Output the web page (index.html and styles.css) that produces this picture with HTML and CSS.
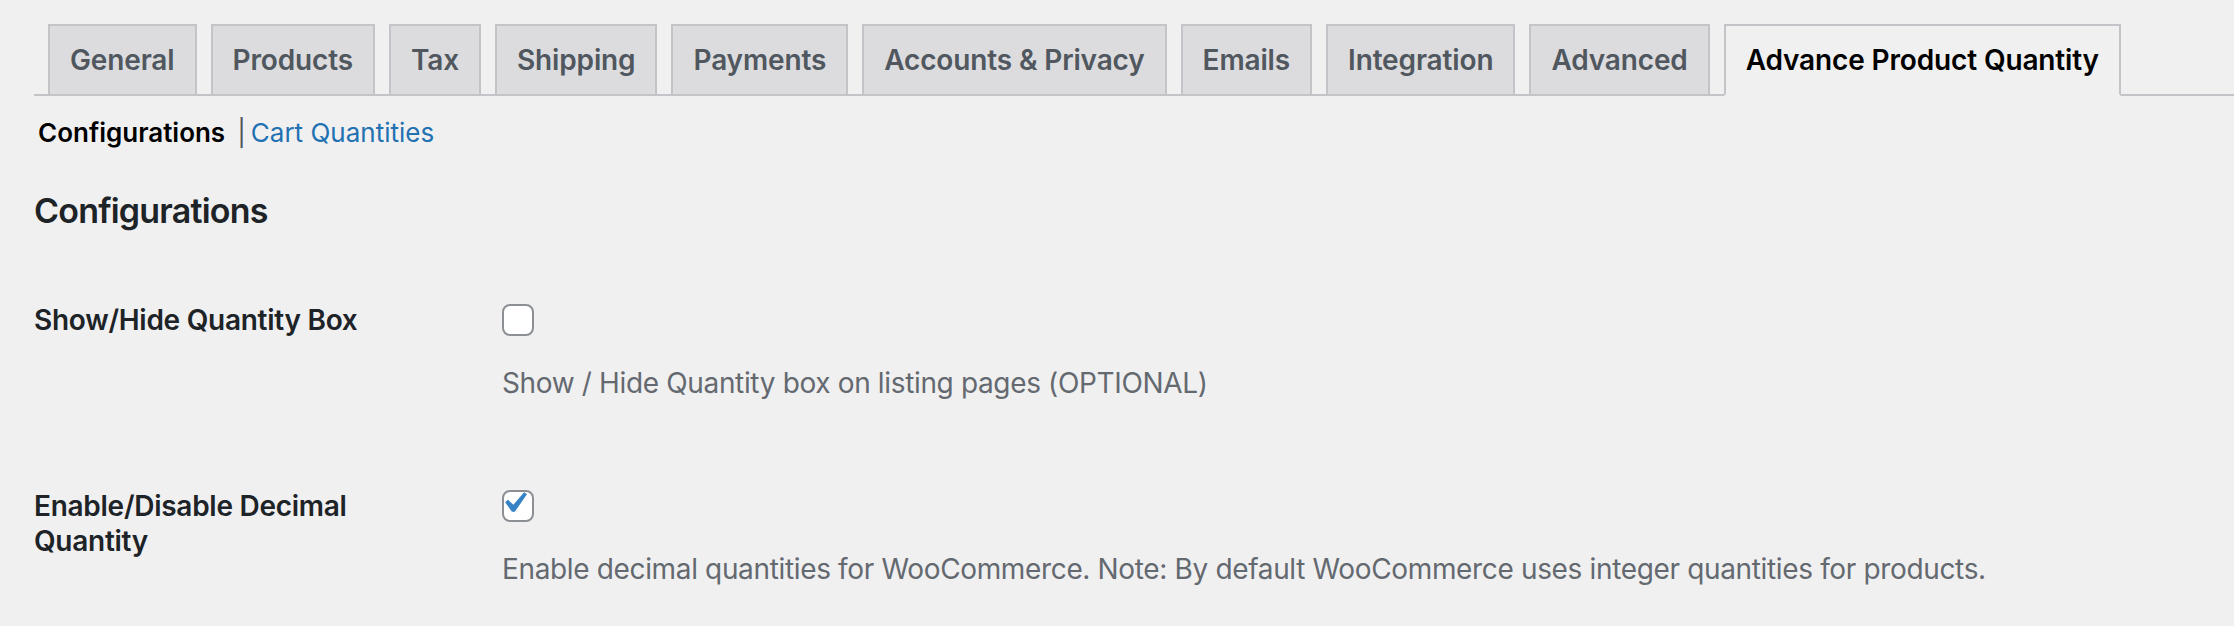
FILE: index.html
```html
<!DOCTYPE html>
<html lang="en">
  <head>
    <meta charset="UTF-8" />
    <meta name="viewport" content="width=device-width, initial-scale=1.0" />
    <title>Advance Product Quantity Settings</title>
    <link rel="stylesheet" href="styles.css">
  </head>
  <body>
    <div class="wrap">
      <!-- Settings tabs -->
      <nav class="nav-tab-wrapper">
        <a class="nav-tab" href="#">General</a>
        <a class="nav-tab" href="#">Products</a>
        <a class="nav-tab" href="#">Tax</a>
        <a class="nav-tab" href="#">Shipping</a>
        <a class="nav-tab" href="#">Payments</a>
        <a class="nav-tab" href="#">Accounts &amp; Privacy</a>
        <a class="nav-tab" href="#">Emails</a>
        <a class="nav-tab" href="#">Integration</a>
        <a class="nav-tab" href="#">Advanced</a>
        <a class="nav-tab nav-tab-active" href="#">Advance Product Quantity</a>
      </nav>

      <!-- Section links -->
      <ul class="subsubsub">
        <li><a class="current" href="#">Configurations</a></li>
        <li><span class="sep">|</span><a href="#">Cart Quantities</a></li>
      </ul>

      <h2 class="section-title">Configurations</h2>

      <!-- Options -->
      <div class="form-table">
        <div class="form-row">
          <div class="form-label">Show/Hide Quantity Box</div>
          <div class="form-field">
            <span class="checkbox"></span>
            <p class="description">Show / Hide Quantity box on listing pages (OPTIONAL)</p>
          </div>
        </div>

        <div class="form-row">
          <div class="form-label">Enable/Disable Decimal<br>Quantity</div>
          <div class="form-field">
            <span class="checkbox checked">
              <svg viewBox="0 0 20 20" width="42" height="42">
                <path d="M14.83 4.89l1.34.94-5.81 8.38H9.02L5.78 9.67l1.34-1.25 2.57 2.4z" fill="#3582c4" />
              </svg>
            </span>
            <p class="description">Enable decimal quantities for WooCommerce. Note: By default WooCommerce uses integer quantities for products.</p>
          </div>
        </div>
      </div>
    </div>
  </body>
</html>
```

FILE: styles.css
```css
/* Page */
html,
body {
  margin: 0;
  padding: 0;
  background-color: #f0f0f1;
  color: #1d2327;
  font-family: 'Inter', 'Roboto', sans-serif;
}

.wrap {
  padding-left: 34px;
}

/* Tabs */
.nav-tab-wrapper {
  display: flex;
  gap: 14px;
  padding: 24px 0 0 14px;
  border-bottom: 2px solid #c3c4c7;
}

.nav-tab {
  display: block;
  margin-bottom: -2px;
  padding: 10px 20px;
  border: 2px solid #c3c4c7;
  background-color: #dcdcde;
  color: #50575e;
  font-size: 28px;
  font-weight: 600;
  line-height: 48px;
  letter-spacing: -0.14px;
  text-decoration: none;
  white-space: nowrap;
}

.nav-tab-active {
  background-color: #f0f0f1;
  border-bottom-color: #f0f0f1;
  color: #000;
}

/* Sub navigation */
.subsubsub {
  display: flex;
  margin: 11px 0 0 4px;
  padding: 0;
  list-style: none;
  font-size: 26px;
  line-height: 52px;
}

.subsubsub a {
  color: #2271b1;
  text-decoration: none;
}

.subsubsub a.current {
  color: #000;
  font-weight: 600;
}

.subsubsub .sep {
  margin: 0 5px 0 12px;
  color: #50575e;
}

/* Section heading */
.section-title {
  margin: 30px 0 0;
  font-size: 34px;
  font-weight: 600;
  line-height: 44px;
  letter-spacing: -0.8px;
}

/* Form rows */
.form-table {
  display: flex;
  flex-direction: column;
  gap: 86px;
  margin-top: 70px;
}

.form-row {
  display: grid;
  grid-template-columns: 468px 1fr;
}

.form-label {
  font-size: 28px;
  font-weight: 600;
  line-height: 35px;
  letter-spacing: -0.27px;
}

.checkbox {
  display: flex;
  justify-content: center;
  align-items: center;
  box-sizing: border-box;
  width: 32px;
  height: 32px;
  margin-top: 1px;
  border: 2px solid #8c8f94;
  border-radius: 8px;
  background-color: #fff;
  overflow: visible;
}

.checkbox svg {
  flex: none;
  margin: -6px 0 0 -8px;
}

.description {
  margin: 27px 0 0;
  color: #646970;
  font-size: 28px;
  line-height: 40px;
  letter-spacing: -0.35px;
}
```
